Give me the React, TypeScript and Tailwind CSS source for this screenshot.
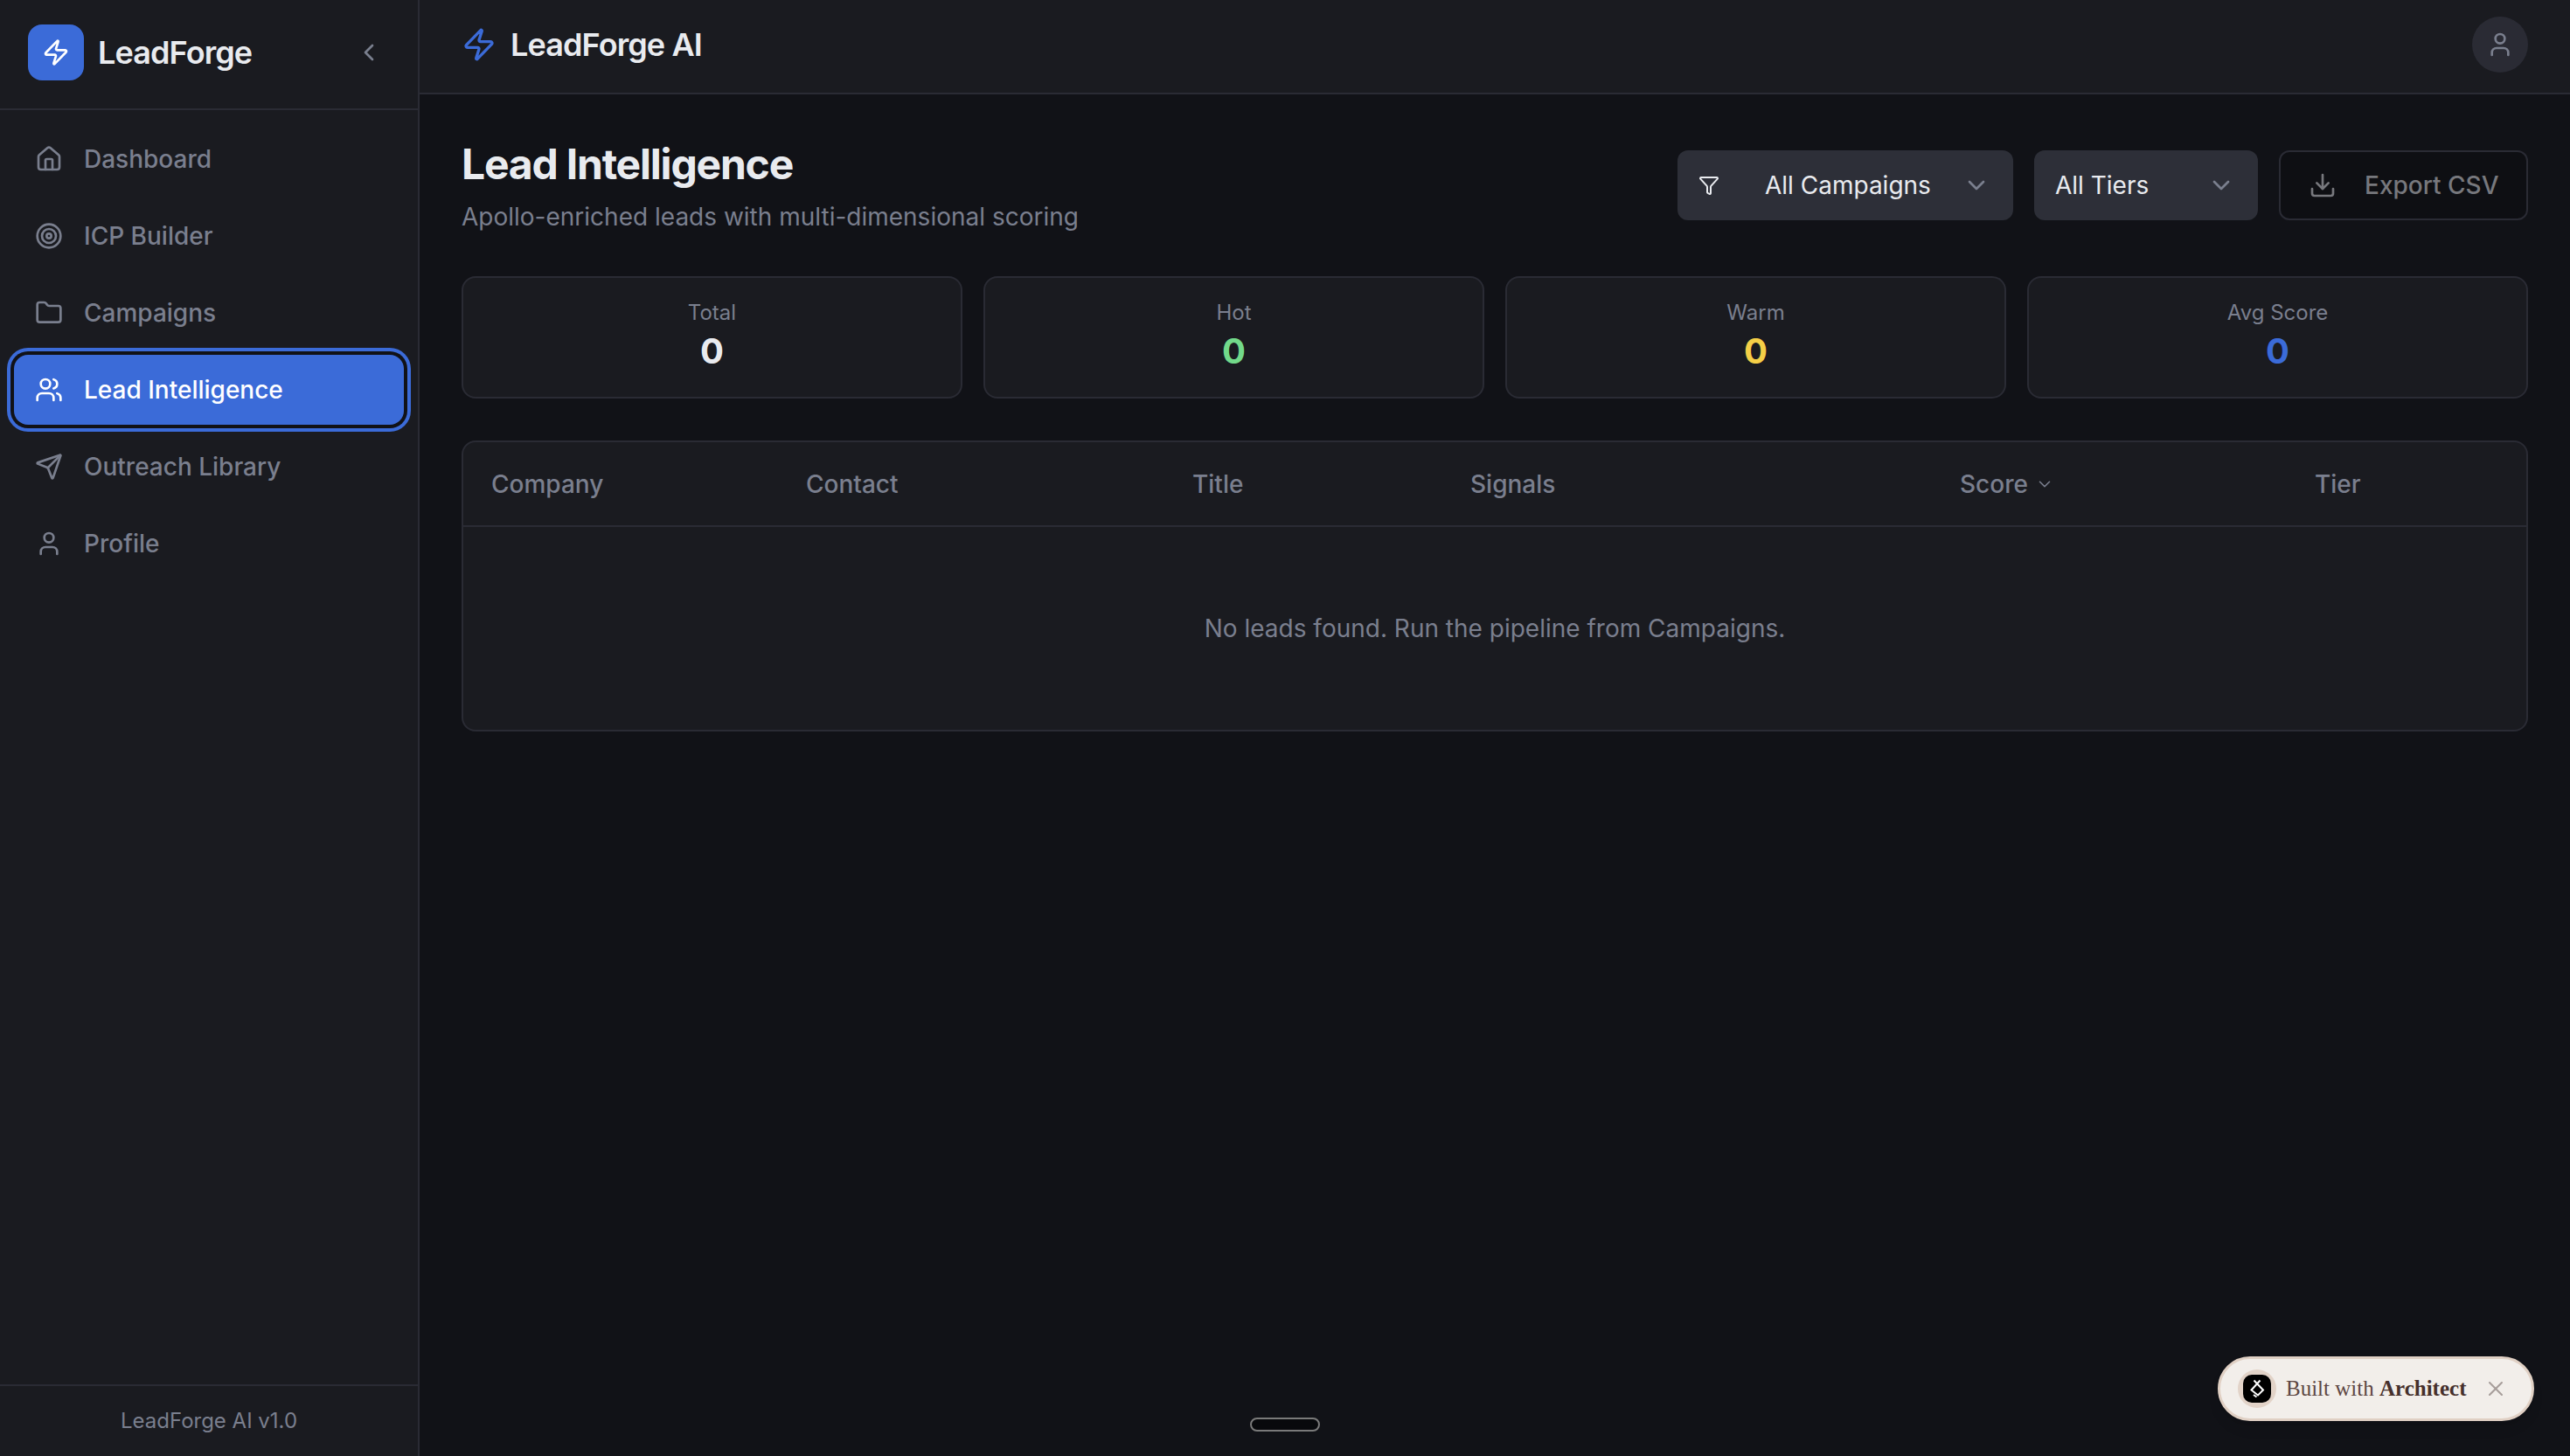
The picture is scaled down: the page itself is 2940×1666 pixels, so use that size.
import { ChevronDown, ChevronLeft, Download, Filter, Folder, House, Send, Target, User, Users, X, Zap } from 'lucide-react';

const nav = [
  { label: 'Dashboard', icon: House },
  { label: 'ICP Builder', icon: Target },
  { label: 'Campaigns', icon: Folder },
  { label: 'Lead Intelligence', icon: Users, active: true },
  { label: 'Outreach Library', icon: Send },
  { label: 'Profile', icon: User },
];

const stats = [
  { label: 'Total', color: 'text-[#e9ebef]' },
  { label: 'Hot', color: 'text-[#72d98a]' },
  { label: 'Warm', color: 'text-[#f5cf47]' },
  { label: 'Avg Score', color: 'text-[#3b6bd8]' },
];

function Sidebar() {
  return (
    <aside className="flex w-[480px] shrink-0 flex-col border-r-2 border-[#2a2b34] bg-[#1a1b20]">
      <div className="flex h-[126px] items-start justify-between border-b-2 border-[#2a2b34] pt-[28px] pl-8 pr-8">
        <div className="flex items-center gap-4">
          <div className="flex h-16 w-16 items-center justify-center rounded-2xl bg-[#3b6bd8]">
            <Zap className="h-8 w-8 text-white" />
          </div>
          <span className="text-[36px] font-semibold tracking-tight text-[#e9ebef]">LeadForge</span>
        </div>
        <button className="mt-2 p-2 text-[#7a7f8e]">
          <ChevronLeft className="h-8 w-8" />
        </button>
      </div>
      <nav className="flex flex-1 flex-col gap-2 p-4">
        {nav.map((item) => (
          <a
            key={item.label}
            className={
              item.active
                ? 'flex h-20 items-center gap-6 rounded-2xl bg-[#3b6bd8] px-6 text-[28px] font-medium text-white ring-4 ring-[#3b6bd8] ring-offset-4 ring-offset-[#111217]'
                : 'flex h-20 items-center gap-6 rounded-2xl px-6 text-[28px] font-medium text-[#7a7f8e]'
            }
          >
            <item.icon className="h-8 w-8" />
            {item.label}
          </a>
        ))}
      </nav>
      <div className="flex h-[82px] items-center justify-center border-t-2 border-[#2a2b34] text-[24px] text-[#7a7f8e]">
        LeadForge AI v1.0
      </div>
    </aside>
  );
}

function SelectBox({ label, width, filter }: { label: string; width: string; filter?: boolean }) {
  return (
    <button className={`flex h-20 items-center justify-between rounded-xl bg-[#2d2f38] pl-6 pr-[26px] text-[28px] text-[#e9ebef] ${width}`}>
      <span className="flex items-center gap-[52px]">
        {filter && <Filter className="h-6 w-6" />}
        {label}
      </span>
      <ChevronDown className="h-8 w-8 text-[#7a7f8e]" />
    </button>
  );
}

function LeadsTable() {
  return (
    <div className="h-[333px] overflow-hidden rounded-2xl border-2 border-[#2a2b34] bg-[#1a1b20]">
      <table className="w-full table-fixed border-collapse">
        <thead>
          <tr className="h-[96px] border-b-2 border-[#2a2b34] text-left text-[28px] font-medium text-[#7a7f8e]">
            <th className="w-[392px] pl-8 font-medium">Company</th>
            <th className="w-[442px] font-medium">Contact</th>
            <th className="w-[318px] font-medium">Title</th>
            <th className="w-[560px] font-medium">Signals</th>
            <th className="w-[406px] font-medium">
              <span className="flex items-center gap-2">
                Score
                <ChevronDown className="h-[22px] w-[22px]" strokeWidth={1.75} />
              </span>
            </th>
            <th className="font-medium">Tier</th>
          </tr>
        </thead>
        <tbody>
          <tr>
            <td colSpan={6} className="h-[233px] text-center text-[28px] text-[#7a7f8e]">
              No leads found. Run the pipeline from Campaigns.
            </td>
          </tr>
        </tbody>
      </table>
    </div>
  );
}

export default function App() {
  return (
    <div className="relative flex h-screen w-screen overflow-hidden bg-[#111217] font-['Inter',sans-serif]">
      <Sidebar />
      <div className="flex min-w-0 flex-1 flex-col">
        <header className="flex h-[108px] items-center justify-between border-b-2 border-[#2a2b34] bg-[#1a1b20] pb-1 pl-12 pr-12">
          <div className="flex items-center gap-4">
            <Zap className="h-10 w-10 text-[#3b6bd8]" />
            <span className="text-[36px] font-semibold tracking-tight text-[#e9ebef]">LeadForge AI</span>
          </div>
          <button className="flex h-16 w-16 items-center justify-center rounded-full bg-[#2a2b34] text-[#7a7f8e]">
            <User className="h-8 w-8" />
          </button>
        </header>
        <main className="flex flex-col gap-12 p-12">
          <div className="flex items-center justify-between">
            <div>
              <h1 className="text-[48px] leading-16 font-bold tracking-tight text-[#e9ebef]">Lead Intelligence</h1>
              <p className="mt-2 text-[28px] leading-10 text-[#7a7f8e]">Apollo-enriched leads with multi-dimensional scoring</p>
            </div>
            <div className="flex gap-6">
              <SelectBox label="All Campaigns" width="w-[384px]" filter />
              <SelectBox label="All Tiers" width="w-[256px]" />
              <button className="flex h-20 w-[285px] items-center gap-8 whitespace-nowrap rounded-xl border-2 border-[#2a2b34] bg-[#0e0f13] px-8 text-[28px] font-medium text-[#77787d]">
                <Download className="h-8 w-8 shrink-0" />
                Export CSV
              </button>
            </div>
          </div>
          <div className="grid grid-cols-4 gap-6">
            {stats.map((s) => (
              <div key={s.label} className="flex h-[140px] flex-col items-center rounded-2xl border-2 border-[#2a2b34] bg-[#1a1b20] p-6">
                <span className="text-[24px] leading-8 text-[#7a7f8e]">{s.label}</span>
                <span className={`mt-1 text-[40px] leading-12 font-bold ${s.color}`}>0</span>
              </div>
            ))}
          </div>
          <LeadsTable />
        </main>
      </div>

      <div className="absolute bottom-[28px] left-[1430px] h-4 w-20 rounded-full border-2 border-[#7a7a7a] bg-[#08090c]" />

      <div className="absolute bottom-[40px] right-[41px] flex h-[74px] w-[362px] items-center rounded-full border-[3px] border-[#e0d0c4] bg-[#f2eeea] pl-[20px] shadow-lg">
        <div className="flex h-11 w-11 items-center justify-center rounded-full bg-[#e2d3c8]">
          <div className="flex h-8 w-8 items-center justify-center rounded-[10px] bg-black">
            <svg viewBox="0 0 24 24" className="h-6 w-6" fill="none" stroke="white" strokeWidth="2">
              <path d="M8.5 2.5L19 13.5l-6 6-7.5-6L15.5 2.5" />
              <path d="M8 19l3.5 2.5" />
            </svg>
          </div>
        </div>
        <span className="ml-[11px] font-['Liberation_Serif',serif] text-[25px] text-[#5d4642]">
          Built with <span className="font-semibold text-[#46302c]">Architect</span>
        </span>
        <X className="ml-auto mr-[27px] h-7 w-7 text-[#a79e9a]" strokeWidth={1.75} />
      </div>
    </div>
  );
}
